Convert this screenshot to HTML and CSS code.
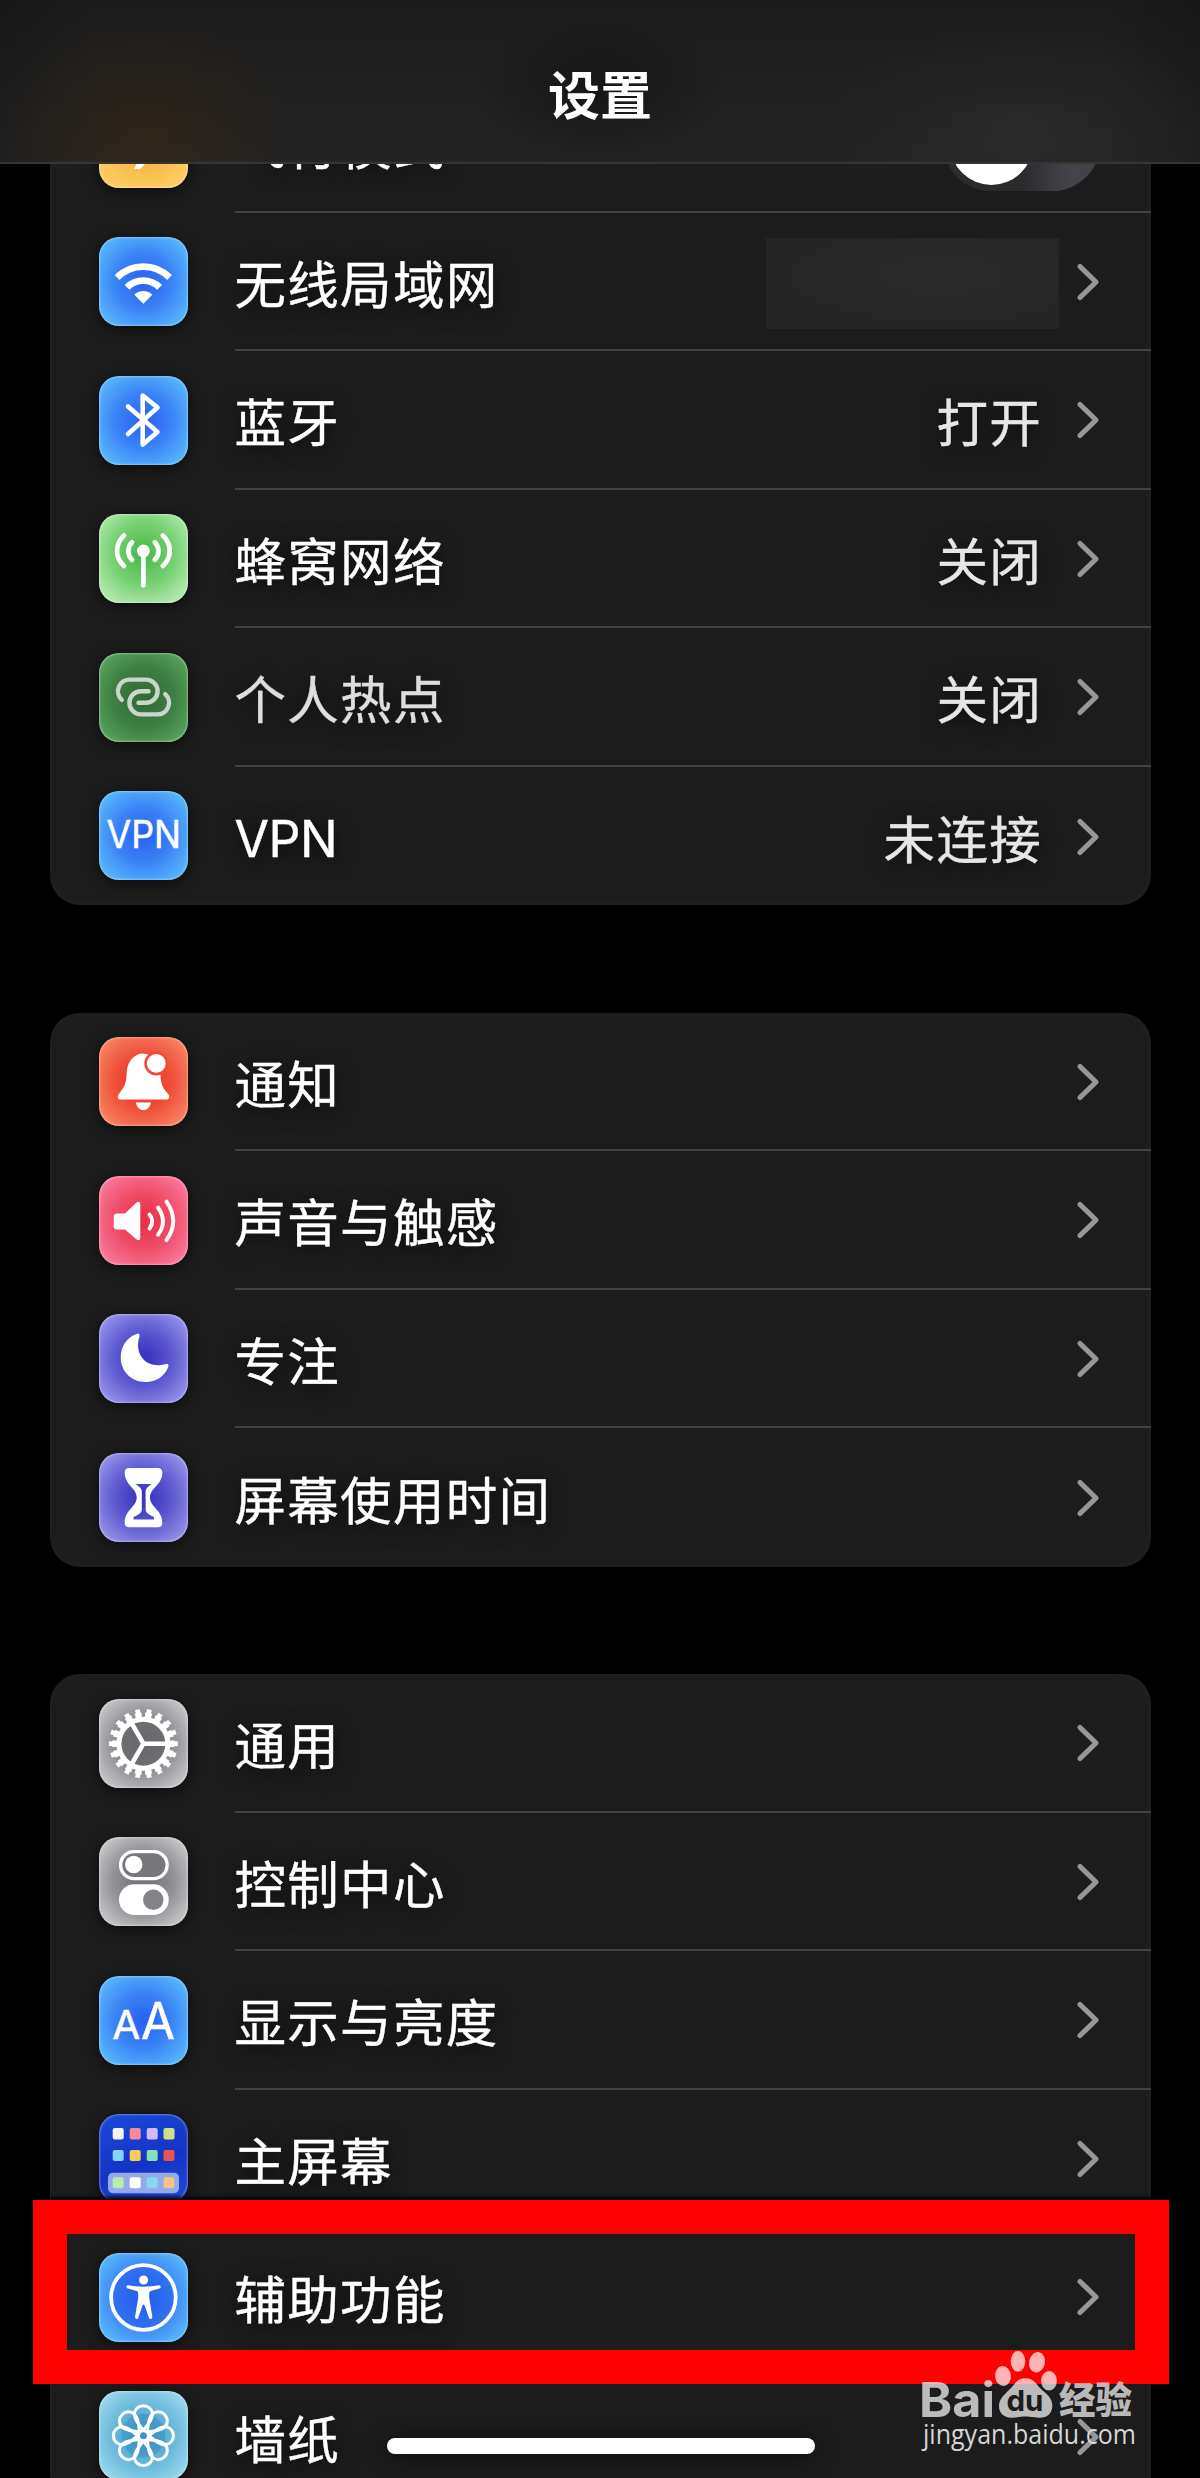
FILE: index.html
```html
<!DOCTYPE html>
<html lang="zh-CN">
<head>
<meta charset="utf-8">
<title>设置</title>
<link rel="stylesheet" href="styles.css">
</head>
<body>
<svg class="defs" width="0" height="0" aria-hidden="true">
  <symbol id="chevron" viewBox="0 0 24 40"><path d="M4 4.5 20 20 4 35.5" fill="none" stroke="currentColor" stroke-width="5.2" stroke-linecap="round" stroke-linejoin="round"/></symbol>
</svg>
<div class="screen">
  <header class="navbar"><h1>设置</h1></header>

  <main class="groups">
    <section class="group">
      <div class="row">
        <span class="tile orange"><svg viewBox="0 0 89 89"><path d="M35 70 44 52H30l-6 8h-5l4-15-4-15h5l6 8h14L34 16h7l18 22h11q7 3 7 7t-7 7H59L41 70z" fill="#fff"/></svg></span>
        <div class="body"><span class="label">飞行模式</span><span class="switch"><i></i></span></div>
      </div>
      <div class="row">
        <span class="tile blue"><svg viewBox="0 0 89 89"><g fill="none" stroke="#fff" stroke-width="6.8"><path d="M18.1 40.5A37 37 0 0 1 70.5 40.5"/><path d="M28 50.4A23 23 0 0 1 60.6 50.4"/></g><path d="M35.3 57.7A12.7 12.7 0 0 1 53.3 57.7L44.3 66.7z" fill="#fff"/></svg></span>
        <div class="body"><span class="label">无线局域网</span><span class="masked"></span><svg class="chev"><use href="#chevron"/></svg></div>
      </div>
      <div class="row">
        <span class="tile blue"><svg viewBox="0 0 89 89"><path d="M29 30.5 58.5 56 43.7 68.5V19.5L58.5 31.5 29 58" fill="none" stroke="#fff" stroke-width="4.6" stroke-linecap="round" stroke-linejoin="round"/></svg></span>
        <div class="body"><span class="label">蓝牙</span><span class="value">打开</span><svg class="chev"><use href="#chevron"/></svg></div>
      </div>
      <div class="row">
        <span class="tile green"><svg viewBox="0 0 89 89"><circle cx="44.4" cy="37" r="6.4" fill="#fff"/><g fill="none" stroke="#fff" stroke-width="4.7" stroke-linecap="round"><path d="M44.4 37V71.5"/><path d="M33 28.2A12.3 12.3 0 0 0 33 45.8M25 21.5A20.3 20.3 0 0 0 25 52M55.8 28.2A12.3 12.3 0 0 1 55.8 45.8M63.8 21.5A20.3 20.3 0 0 1 63.8 52"/></g></svg></span>
        <div class="body"><span class="label">蜂窝网络</span><span class="value">关闭</span><svg class="chev"><use href="#chevron"/></svg></div>
      </div>
      <div class="row">
        <span class="tile dim"><svg viewBox="0 0 89 89"><g fill="none" stroke="#c9d6c8" stroke-width="4.4" stroke-linecap="round"><path d="M22.8 46.8A11.6 11.6 0 0 1 31 26.6H47A11.6 11.6 0 0 1 47 49.8H39.5"/><path d="M66.2 41.2A11.6 11.6 0 0 1 58 61.4H42A11.6 11.6 0 0 1 42 38.2H49.5"/></g></svg></span>
        <div class="body"><span class="label muted">个人热点</span><span class="value">关闭</span><svg class="chev"><use href="#chevron"/></svg></div>
      </div>
      <div class="row">
        <span class="tile blue"><svg viewBox="0 0 89 89"><text x="7.5" y="57.3" class="glyph" font-size="38.5" textLength="74.5" lengthAdjust="spacingAndGlyphs">VPN</text></svg></span>
        <div class="body"><span class="label latin">VPN</span><span class="value">未连接</span><svg class="chev"><use href="#chevron"/></svg></div>
      </div>
    </section>

    <section class="group">
      <div class="row">
        <span class="tile red"><svg viewBox="0 0 89 89"><path d="M43 16.5C35 17 28.5 25 27.8 34 27.3 44 27 47.5 22 54L19.5 57.5C18 60.5 19 62.5 22 62.5H67C70 62.5 71 60.5 69.5 57.5L66.5 54C62 47.5 61.5 43 61.5 34 60 25 54 16.5 43 16.5z" fill="#fff"/><path d="M36.7 65.5H52Q50 73.3 44.4 73.3T36.7 65.5z" fill="#fff"/><circle cx="57.3" cy="26.4" r="12" fill="#ee4a37"/><circle cx="57.3" cy="26.4" r="9.4" fill="#fff"/></svg></span>
        <div class="body"><span class="label">通知</span><svg class="chev"><use href="#chevron"/></svg></div>
      </div>
      <div class="row">
        <span class="tile pink"><svg viewBox="0 0 89 89"><path d="M18 37.5H26L37 27Q41.3 24 41.3 28.5V61.5Q41.3 66 37 63L26 53.5H18Q14.7 53.5 14.7 50V41Q14.7 37.5 18 37.5z" fill="#fff"/><g fill="none" stroke="#fff" stroke-width="3.9" stroke-linecap="round"><path d="M50.5 38.5Q56 45.4 50.5 52.5M59 31.5Q69 45.4 59 58.8M67.5 25.5Q81 45.4 67.5 64"/></g></svg></span>
        <div class="body"><span class="label">声音与触感</span><svg class="chev"><use href="#chevron"/></svg></div>
      </div>
      <div class="row">
        <span class="tile indigo"><svg viewBox="0 0 89 89"><path d="M37.5 20Q41 18.5 40.5 22.5C36 35 42 50 57 51 61 51.5 64 51 67 50 70 49.500 69.800 51.500 69 53.500 66 62 57 68 46.500 68 32 68 21.700 57 21.700 43.500 21.700 32 28 23.500 37.500 20z" fill="#fff"/></svg></span>
        <div class="body"><span class="label">专注</span><svg class="chev"><use href="#chevron"/></svg></div>
      </div>
      <div class="row">
        <span class="tile indigo"><svg viewBox="0 0 89 89"><path fill="#fff" fill-rule="evenodd" d="M30 15H59Q63.3 15 63.3 19.5C63.3 32 51 35 51 44.5S63.3 57 63.3 69.5Q63.3 74.3 59 74.3H30Q25.7 74.3 25.7 69.5C25.7 57 37.7 54 37.7 44.5S25.7 32 25.7 19.5Q25.7 15 30 15zM36.5 31Q42.8 35 42.8 38V57Q42.8 60.5 34.5 64V66.5H55V64Q46.6 60.5 46.6 57V38Q46.6 35 52.5 31z"/></svg></span>
        <div class="body"><span class="label">屏幕使用时间</span><svg class="chev"><use href="#chevron"/></svg></div>
      </div>
    </section>

    <section class="group">
      <div class="row">
        <span class="tile gray"><svg viewBox="0 0 89 89"><g transform="translate(44.4 44.7)"><circle r="22" fill="#66656a" opacity=".75"/><g fill="none" stroke="#fff"><circle r="24.5" stroke-width="5"/><circle r="28.7" stroke-width="5" pathLength="180" stroke-dasharray="6.6 3.4" stroke-dashoffset="3.3"/><circle r="32.2" stroke-width="4.6" pathLength="180" stroke-dasharray="4.2 5.8" stroke-dashoffset="2.1"/><path stroke-width="4.6" d="M0 0H24M0 0-12 20.8M0 0-12-20.8"/></g></g></svg></span>
        <div class="body"><span class="label">通用</span><svg class="chev"><use href="#chevron"/></svg></div>
      </div>
      <div class="row">
        <span class="tile gray"><svg viewBox="0 0 89 89"><rect x="21.6" y="14.6" width="46.5" height="27" rx="13.5" fill="#77767b" stroke="#fff" stroke-width="3.4"/><circle cx="34.7" cy="27.5" r="8.7" fill="#fff"/><rect x="20" y="47.3" width="49.7" height="30.7" rx="15.3" fill="#fff"/><circle cx="54.3" cy="62.7" r="10.2" fill="#838287"/></svg></span>
        <div class="body"><span class="label">控制中心</span><svg class="chev"><use href="#chevron"/></svg></div>
      </div>
      <div class="row">
        <span class="tile blue"><svg viewBox="0 0 89 89"><text x="13.3" y="63.3" class="glyph" font-size="39" textLength="28" lengthAdjust="spacingAndGlyphs">A</text><text x="42" y="63.3" class="glyph" font-size="51" textLength="34" lengthAdjust="spacingAndGlyphs">A</text></svg></span>
        <div class="body"><span class="label">显示与亮度</span><svg class="chev"><use href="#chevron"/></svg></div>
      </div>
      <div class="row">
        <span class="tile navy"><svg viewBox="0 0 89 89"><rect x="9" y="58.7" width="71" height="20.5" rx="5" fill="#93a9ea"/>
          <g><rect x="13.7" y="14" width="11" height="11.5" rx="2" fill="#f3f3f1"/><rect x="30.7" y="14" width="11" height="11.5" rx="2" fill="#f48a9c"/><rect x="47.7" y="14" width="11" height="11.5" rx="2" fill="#d3b9fa"/><rect x="64.5" y="14" width="11" height="11.5" rx="2" fill="#d3df83"/></g>
          <g><rect x="13.7" y="36" width="11" height="11" rx="2" fill="#84d3fb"/><rect x="30.7" y="36" width="11" height="11" rx="2" fill="#fbcb58"/><rect x="47.7" y="36" width="11" height="11" rx="2" fill="#86dfb5"/><rect x="64.5" y="36" width="11" height="11" rx="2" fill="#e8564f"/></g>
          <g><rect x="13.7" y="63.3" width="11" height="11" rx="2" fill="#b5edac"/><rect x="30.7" y="63.3" width="11" height="11" rx="2" fill="#fff"/><rect x="47.7" y="63.3" width="11" height="11" rx="2" fill="#86d8f2"/><rect x="64.5" y="63.3" width="11" height="11" rx="2" fill="#f8c285"/></g></svg></span>
        <div class="body"><span class="label">主屏幕</span><svg class="chev"><use href="#chevron"/></svg></div>
      </div>
      <div class="row">
        <span class="tile blue"><svg viewBox="0 0 89 89"><circle cx="44.4" cy="44.5" r="32.3" fill="#2459e6" fill-opacity=".45" stroke="#fff" stroke-width="3.8"/><circle cx="44.6" cy="27" r="4.5" fill="#fff"/><path d="M29 32.3C38 34.2 51 34.2 60 32.3Q62.5 32.5 61.3 35.2L51 38.2Q50 39 50.2 45L53.4 64Q52.8 67 50.2 65.6L45.6 52.5Q44.5 50.5 43.5 52.5L39 65.6Q36.5 67 36 64L39.2 45Q39.4 39 38.4 38.2L28 35.2Q26.5 32.5 29 32.3z" fill="#fff"/></svg></span>
        <div class="body"><span class="label">辅助功能</span><svg class="chev"><use href="#chevron"/></svg></div>
      </div>
      <div class="row">
        <span class="tile sky"><svg viewBox="0 0 89 89"><defs><path id="petal" d="M0-5.5-6.5-14Q-9-18-9-21.5A9 8.5 0 0 1 9-21.5Q9-18 6.5-14z"/></defs><circle cx="44.4" cy="44.7" r="22" fill="#2d86bd" opacity=".4"/><g transform="translate(44.4 44.7)" fill="none" stroke="#fff" stroke-width="3" stroke-linejoin="round"><use href="#petal"/><use href="#petal" transform="rotate(45)"/><use href="#petal" transform="rotate(90)"/><use href="#petal" transform="rotate(135)"/><use href="#petal" transform="rotate(180)"/><use href="#petal" transform="rotate(225)"/><use href="#petal" transform="rotate(270)"/><use href="#petal" transform="rotate(315)"/><circle r="5"/></g></svg></span>
        <div class="body"><span class="label">墙纸</span><svg class="chev"><use href="#chevron"/></svg></div>
      </div>
    </section>
  </main>

  <div class="callout"></div>
  <div class="home-indicator"></div>
  <svg class="watermark" viewBox="0 0 220 108">
    <g fill="#fff" fill-opacity=".7">
      <ellipse cx="83" cy="28" rx="7.9" ry="10" transform="rotate(-6 83 28)"/><ellipse cx="98" cy="13.3" rx="7.3" ry="10.5"/><ellipse cx="117" cy="14.3" rx="7.9" ry="10.3" transform="rotate(12 117 14.3)"/><ellipse cx="129" cy="32.7" rx="7.9" ry="9.8"/>
      <path d="M105.5 30.3C115 30.3 117 38 122 42 128 47 132.5 51 132.3 58 132 66 127 70 119 69.7 112 69.3 109 68.5 105.5 68.5S99 69.3 92 69.7C84 70 79 65 79 58 79 51 84 47 89 42 94 38 96 30.3 105.5 30.3z"/>
      <text x="-1" y="69" class="brand" font-size="48" textLength="76" lengthAdjust="spacingAndGlyphs">Bai</text>
      <text x="139" y="66" class="brand-cn" font-size="37" textLength="73" lengthAdjust="spacingAndGlyphs">经验</text>
    </g>
    <text x="86.500" y="62.7" class="brand" font-size="29" fill="#1c1c1c" textLength="37" lengthAdjust="spacingAndGlyphs">du</text>
    <text x="3" y="96" class="site" font-size="27" textLength="213" lengthAdjust="spacingAndGlyphs">jingyan.baidu.com</text>
  </svg>
</div>
</body>
</html>
```
FILE: styles.css
```css
* { box-sizing: border-box; }
html, body { margin: 0; background: #000; }
body { font-family: "Noto Sans CJK SC", "Noto Sans", sans-serif; color: #fff; }
.defs { position: absolute; }

.screen {
  position: relative;
  width: 1200px;
  height: 2478px;
  overflow: hidden;
  background: #000;
}

.navbar {
  position: relative;
  z-index: 2;
  height: 164px;
  padding-top: 23px;
  display: flex;
  align-items: center;
  justify-content: center;
  border-bottom: 2px solid #353533;
  background:
    radial-gradient(ellipse 150px 130px at 145px 140px, rgba(70, 42, 12, .35), transparent),
    radial-gradient(ellipse 130px 80px at 600px 94px, rgba(0, 0, 0, .3), transparent),
    radial-gradient(ellipse 200px 100px at 1020px 120px, rgba(255, 255, 255, .03), transparent),
    linear-gradient(90deg, rgba(0, 0, 0, .15), transparent 8%, transparent 92%, rgba(0, 0, 0, .15)),
    linear-gradient(#1b1b1b, #242424);
}
.navbar h1 {
  margin: 0;
  font-size: 52px;
  font-weight: 700;
  line-height: 70px;
}

.groups {
  margin-top: -90px;
  padding: 0 49px 0 50px;
  display: flex;
  flex-direction: column;
  gap: 107.5px;
}
.group {
  flex: none;
  overflow: hidden;
  border-radius: 30px;
  background: #1c1c1c;
  box-shadow: inset 0 0 14px rgba(255, 255, 255, .035);
}
.row {
  height: 138.5px;
  padding-left: 49px;
  display: flex;
  align-items: center;
  gap: 47px;
}
.body {
  flex: 1;
  height: 100%;
  padding-top: 2px;
  padding-right: 51px;
  display: flex;
  align-items: center;
  border-bottom: 2px solid #424241;
}
.row:last-child .body { border-bottom: 0; }

.label, .value {
  font-size: 51.5px;
  letter-spacing: 1.3px;
  line-height: 76px;
  -webkit-text-stroke: .4px currentColor;
  text-shadow: 0 4px 20px rgba(0, 0, 0, .7);
}
.label { flex: 1; margin-left: -.5px; }
.label.muted { color: #dededf; }
.label.latin { padding-top: 4px; font-family: Inter, "Liberation Sans", sans-serif; font-size: 50px; letter-spacing: -.5px; }
.value { color: #e6e6e8; margin-right: 34px; }

.chev { flex: none; width: 24px; height: 40px; color: #97979b; }
.masked {
  width: 293px;
  height: 91px;
  margin-right: 17px;
  margin-top: 3px;
  background: radial-gradient(ellipse at 60% 40%, #292929, #242424);
}
.switch {
  width: 157px;
  height: 95px;
  padding: 6px 7px;
  border-radius: 48px;
  background: linear-gradient(90deg, #2b2b2e 50%, #434349 80%);
}
.switch i { display: block; width: 83px; height: 83px; border-radius: 50%; background: #fff; }

.tile {
  flex: none;
  width: 89px;
  height: 89px;
  border-radius: 20px;
  overflow: hidden;
  box-shadow: inset 0 0 2px 1px rgba(255, 255, 255, .35), 0 3px 14px rgba(0, 0, 0, .6);
}
.tile svg { display: block; width: 89px; height: 89px; }
.orange { background: radial-gradient(circle at 50% 50%, #f5a83a, #fccb5c 75%); }
.blue { background: radial-gradient(circle, #2a63f0 5%, #3a84f6 45%, #52b0fa 80%); }
.green { background: radial-gradient(circle at 50% 45%, #50bd50 10%, #74cf70 45%, #aee8a8 82%); }
.dim { background: radial-gradient(circle, #336c38 10%, #3e8043 50%, #56a45c 88%); }
.red { background: radial-gradient(circle, #e83328 10%, #ef4f39 45%, #f88160 85%); }
.pink { background: radial-gradient(circle, #ea3349 10%, #f04c68 45%, #fa769a 85%); }
.indigo { background: radial-gradient(circle, #3c36c0 10%, #5c58cf 45%, #928ee8 85%); }
.gray { background: radial-gradient(circle, #77767b 15%, #949398 50%, #c0bfc2 82%); }
.navy { background: linear-gradient(160deg, #1c4bd8, #1433c6 55%, #2049dc); }
.sky { background: radial-gradient(circle, #4b9fcc 15%, #6bb9dc 50%, #97d6ea 85%); }
.glyph { font-family: Inter, "Liberation Sans", sans-serif; font-weight: 400; fill: #fff; stroke: #fff; stroke-width: .5px; }

.callout {
  position: absolute;
  left: 33px;
  top: 2200px;
  width: 1136px;
  height: 184px;
  border: 34px solid #fe0202;
}
.callout::before {
  content: "";
  position: absolute;
  left: -16px;
  right: -16px;
  top: -40px;
  height: 6px;
  background: linear-gradient(transparent, #000);
}
.home-indicator {
  position: absolute;
  left: 387px;
  top: 2438px;
  width: 428px;
  height: 16px;
  border-radius: 8px;
  background: #fff;
  box-shadow: 0 2px 22px rgba(0, 0, 0, .6);
}
.watermark { position: absolute; left: 920px; top: 2348px; width: 220px; height: 108px; overflow: visible; }
.brand { font-family: Inter, "Liberation Sans", sans-serif; font-weight: 700; }
.brand-cn { font-family: "Noto Sans CJK SC", sans-serif; font-weight: 900; }
.site { font-family: "Open Sans", "Noto Sans", sans-serif; fill: #d6d6d6; }
```
